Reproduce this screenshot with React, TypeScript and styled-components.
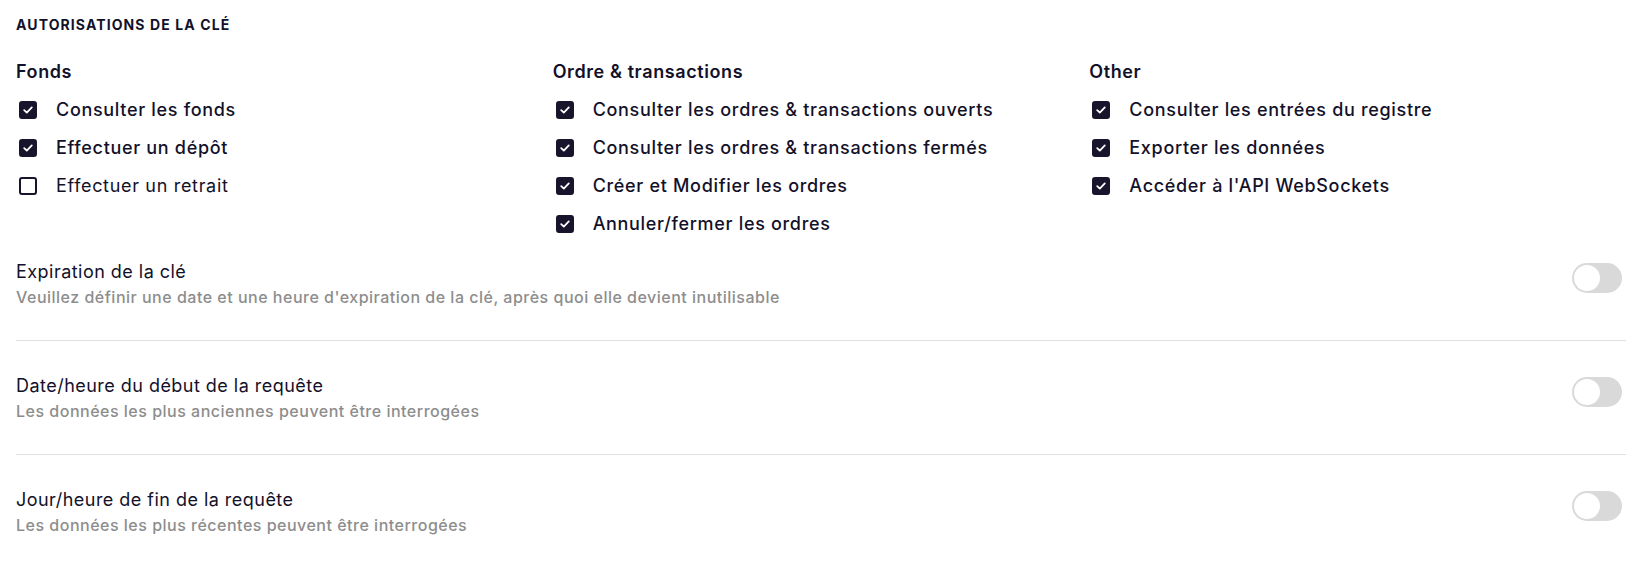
import React from "react";
import styled, { createGlobalStyle } from "styled-components";

const GlobalStyle = createGlobalStyle`
  html, body { margin: 0; padding: 0; background: #ffffff; }
  body { font-family: Inter, "Noto Sans", Roboto, sans-serif; color: #13112a; -webkit-font-smoothing: antialiased; }
  * { box-sizing: border-box; }
`;

const Page = styled.div`
  padding: 15px 11px 0 16px;
  width: 1637px;
`;

const PanelTitle = styled.h2`
  margin: 0;
  font-size: 14px;
  line-height: 20px;
  font-weight: 700;
  letter-spacing: 1.1px;
  text-transform: uppercase;
  color: #13112a;
`;

const Columns = styled.div`
  display: grid;
  grid-template-columns: repeat(3, 1fr);
  margin-top: 25px;
`;

const Column = styled.div`
  display: flex;
  flex-direction: column;
  gap: 14px;
`;

const GroupHeading = styled.h3`
  margin: 0;
  font-size: 18px;
  line-height: 24px;
  font-weight: 600;
  letter-spacing: 0.6px;
  color: #13112a;
`;

const CheckRow = styled.label`
  display: flex;
  align-items: center;
  gap: 16px;
  height: 24px;
  cursor: pointer;
`;

const Box = styled.span<{ $checked: boolean }>`
  width: 18px;
  height: 18px;
  margin: 0 3px;
  border-radius: 3px;
  flex: none;
  display: flex;
  align-items: center;
  justify-content: center;
  background: ${(p) => (p.$checked ? "#17142c" : "#ffffff")};
  border: 2px solid #17142c;
`;

const CheckLabel = styled.span<{ $checked: boolean }>`
  font-size: 18px;
  line-height: 24px;
  font-weight: ${(p) => (p.$checked ? 500 : 400)};
  letter-spacing: 0.68px;
  color: #13112a;
`;

const Sections = styled.div`
  margin-top: 24px;
`;

const Section = styled.div`
  display: flex;
  align-items: flex-start;
  justify-content: space-between;
  padding: 0 4px 32px 0;

  & + & {
    border-top: 1px solid #e0e0e0;
    padding-top: 33px;
  }
`;

const SectionText = styled.div`
  display: flex;
  flex-direction: column;
  gap: 2px;
`;

const SectionTitle = styled.div`
  font-size: 18px;
  line-height: 24px;
  font-weight: 400;
  letter-spacing: 0.47px;
  color: #13112a;
`;

const SectionHint = styled.div`
  font-size: 16px;
  line-height: 22px;
  font-weight: 500;
  letter-spacing: 0.5px;
  color: #8d8d8d;
`;

const Toggle = styled.span`
  position: relative;
  width: 50px;
  height: 30px;
  margin-top: 3px;
  border-radius: 15px;
  background: #d9d9d9;
  flex: none;

  &::after {
    content: "";
    position: absolute;
    left: 2px;
    top: 2px;
    width: 26px;
    height: 26px;
    border-radius: 50%;
    background: #ffffff;
  }
`;

const Check = () => (
  <svg width="12" height="12" viewBox="0 0 12 12" fill="none">
    <path d="M2.2 6.2 L4.8 8.6 L9.8 3.4" stroke="#ffffff" strokeWidth="1.8" strokeLinecap="round" strokeLinejoin="round" />
  </svg>
);

type Item = { label: string; checked: boolean };

const groups: { title: string; items: Item[] }[] = [
  {
    title: "Fonds",
    items: [
      { label: "Consulter les fonds", checked: true },
      { label: "Effectuer un dépôt", checked: true },
      { label: "Effectuer un retrait", checked: false },
    ],
  },
  {
    title: "Ordre & transactions",
    items: [
      { label: "Consulter les ordres & transactions ouverts", checked: true },
      { label: "Consulter les ordres & transactions fermés", checked: true },
      { label: "Créer et Modifier les ordres", checked: true },
      { label: "Annuler/fermer les ordres", checked: true },
    ],
  },
  {
    title: "Other",
    items: [
      { label: "Consulter les entrées du registre", checked: true },
      { label: "Exporter les données", checked: true },
      { label: "Accéder à l'API WebSockets", checked: true },
    ],
  },
];

const settings = [
  {
    title: "Expiration de la clé",
    hint: "Veuillez définir une date et une heure d'expiration de la clé, après quoi elle devient inutilisable",
  },
  {
    title: "Date/heure du début de la requête",
    hint: "Les données les plus anciennes peuvent être interrogées",
  },
  {
    title: "Jour/heure de fin de la requête",
    hint: "Les données les plus récentes peuvent être interrogées",
  },
];

export default function App() {
  return (
    <>
      <GlobalStyle />
      <Page>
        <PanelTitle>Autorisations de la clé</PanelTitle>
        <Columns>
          {groups.map((g) => (
            <Column key={g.title}>
              <GroupHeading>{g.title}</GroupHeading>
              {g.items.map((it) => (
                <CheckRow key={it.label}>
                  <Box $checked={it.checked}>{it.checked && <Check />}</Box>
                  <CheckLabel $checked={it.checked}>{it.label}</CheckLabel>
                </CheckRow>
              ))}
            </Column>
          ))}
        </Columns>
        <Sections>
          {settings.map((s) => (
            <Section key={s.title}>
              <SectionText>
                <SectionTitle>{s.title}</SectionTitle>
                <SectionHint>{s.hint}</SectionHint>
              </SectionText>
              <Toggle />
            </Section>
          ))}
        </Sections>
      </Page>
    </>
  );
}
